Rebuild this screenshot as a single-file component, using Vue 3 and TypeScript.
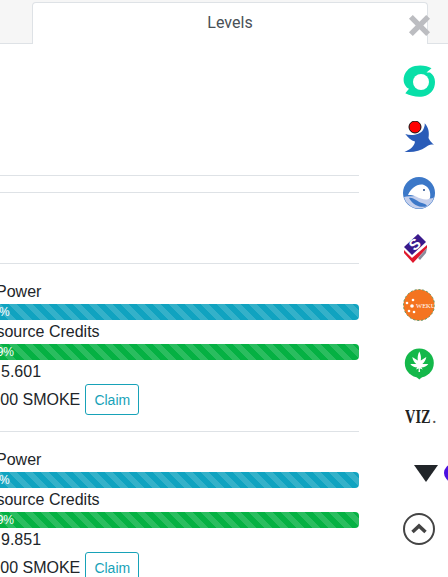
<script setup lang="ts">
interface Account {
  vp: string;
  rc: string;
  value: string;
}

const accounts: Account[] = [
  { vp: '100%', rc: '99%', value: '5.601' },
  { vp: '100%', rc: '99%', value: '9.851' },
];
</script>

<template>
  <div class="page">
    <header class="tabs">
      <div class="tab">Levels</div>
      <svg class="close" viewBox="0 0 24 24" aria-label="close">
        <path d="M5 1 L12 8 L19 1 L23 5 L16 12 L23 19 L19 23 L12 16 L5 23 L1 19 L8 12 L1 5 Z" fill="#bcbdc1" />
      </svg>
    </header>

    <div class="body">
      <main class="main">
        <div class="block block--first"></div>
        <div class="block block--second"></div>
        <div class="block block--third"></div>

        <section v-for="item in accounts" :key="item.value" class="account">
          <div class="label label--power">Power</div>
          <div class="progress">
            <div class="bar bar--info">{{ item.vp }}</div>
          </div>
          <div class="label">Resource Credits</div>
          <div class="progress">
            <div class="bar bar--success">{{ item.rc }}</div>
          </div>
          <div class="label label--value">{{ item.value }}</div>
          <div class="reward">
            <span>0.000 SMOKE</span>
            <button class="claim" type="button">Claim</button>
          </div>
        </section>
      </main>

      <aside class="side">
        <svg class="icon" viewBox="0 0 32 32">
          <path d="M28.500 3.300C24 .5 14-1 7 3 1 7-1 15 2 20c1 2 2.500 3.300 4 3.800L2.300 28.300C8 31 14 32.500 20 31.500 28 30 32 24 32 17c0-4.500-2-7.500-5-9.500h-3.500z" fill="#08dfa8" />
          <circle cx="18" cy="17" r="8" fill="#fff" />
        </svg>

        <svg class="icon" viewBox="0 0 32 32">
          <path d="M21.700 2.300C25.500 6 26.500 12 25.500 17 27 20 28 21 31 24 28 23 25.500 24 23 26 17 30 9 32 1.500 30.700 7 29 11.500 25 12 20.500 8 19.500 5 16.500 2.300 13 8 15 17 14 20 9 21 7 22 5 21.700 2.300Z" fill="#2a5cb8" />
          <circle cx="12" cy="6" r="6" fill="#f00" stroke="#111" stroke-width="1" />
        </svg>

        <svg class="icon" viewBox="0 0 32 32">
          <circle cx="16" cy="16" r="16" fill="#3c78c8" />
          <path d="M1 20A15.500 15.500 0 0 0 31 20C28 24 20 18 13 19 8 19.500 4 19 1 20Z" fill="#c4cfec" />
          <path d="M5 18C8 11 15 6 21 8 26 10 28 15 27 21 24 24 18 22 13 19.500 10 18 8 18 5 18Z" fill="#fff" />
          <path d="M6 21C11 20 14 25 19 26 21 26.500 23 27 24 29 20 31 11 30 6 21Z" fill="#3c78c8" />
          <circle cx="21" cy="13" r="1" fill="#234d8a" />
        </svg>

        <svg class="icon" viewBox="0 0 32 32">
          <path d="M1 17 L9 25 L24 12 L24 15 L10 30 L1 20 Z" fill="#e0182d" />
          <path d="M15 25 L24 15 L23 20 L17 27 Z" fill="#8a8a9a" />
          <path d="M1 14 L15 1 L23 9 L9 22 Z" fill="#3a1a8c" />
          <text class="icon-letter" x="12" y="16.500" text-anchor="middle" transform="rotate(-42 12 11.500)">S</text>
        </svg>

        <svg class="icon" viewBox="0 0 32 32">
          <circle cx="16" cy="16" r="15.500" fill="#f47420" stroke="#5a9a6a" stroke-width="1" stroke-dasharray="2 2" />
          <circle cx="4" cy="14" r="1.300" fill="#fff" />
          <circle cx="9" cy="17" r="1.800" fill="#fff" />
          <circle cx="6" cy="22" r="1.300" fill="#fff" />
          <circle cx="10" cy="11" r="1.300" fill="#fff" />
          <circle cx="11" cy="23" r="1.300" fill="#fff" />
          <text class="icon-weku" x="13" y="18.500">WEKU</text>
        </svg>

        <svg class="icon icon--pin" viewBox="0 0 32 32">
          <g transform="translate(0.300 3.500)">
            <circle cx="16" cy="14.500" r="14.500" fill="#14b84a" />
            <path d="M12 27.500 L20 27.500 L16 31 Z" fill="#14b84a" />
            <path d="M16 3C17.500 6 18 9 17.500 12L23 8.500C22.500 11.500 21 14 19 15.500L25 15.500C23.500 17.500 21 19 18 19L19.500 21 16.500 20 16.800 23.500H15.200L15.500 20 12.500 21 14 19C11 19 8.500 17.500 7 15.500L13 15.500C11 14 9.500 11.500 9 8.500L14.500 12C14 9 14.500 6 16 3Z" fill="#fff" />
          </g>
        </svg>

        <div class="viz"><span class="viz-name">VIZ</span><span class="viz-dot">.</span></div>

        <div class="dropdown">
          <svg class="caret" viewBox="0 0 24 17">
            <path d="M0 0H24L12 17Z" fill="#212529" />
          </svg>
          <span class="dot"></span>
        </div>

        <svg class="icon" viewBox="0 0 32 32">
          <circle cx="16" cy="16" r="15" fill="none" stroke="#444" stroke-width="2" />
          <path d="M9.500 19L16 13L22.500 19" fill="none" stroke="#444" stroke-width="3.500" />
        </svg>
      </aside>
    </div>
  </div>
</template>

<style scoped>
.page {
  width: 448px;
  height: 577px;
  overflow: hidden;
  background: #fff;
  color: #212529;
  font-family: "Liberation Sans", Arial, sans-serif;
  font-size: 16px;
  line-height: 24px;
}

.tabs {
  position: relative;
  display: flex;
  height: 44px;
  box-sizing: border-box;
  padding: 2px 20px 0 32px;
  background: #f6f6f6;
  border-bottom: 1px solid #dee2e6;
}

.tab {
  width: 396px;
  height: 42px;
  box-sizing: border-box;
  background: #fff;
  border: 1px solid #dee2e6;
  border-bottom: 0;
  border-radius: 4px 4px 0 0;
  text-align: center;
  color: #495057;
  font-family: Roboto, sans-serif;
  line-height: 39px;
}

.close {
  position: absolute;
  left: 408px;
  top: 14px;
  width: 23px;
  height: 23px;
}

.body {
  display: flex;
}

.main {
  flex: none;
  width: 383px;
  margin-left: -24px;
}

.block {
  border-bottom: 1px solid #dee2e6;
}

.block--first {
  height: 131px;
}

.block--second {
  height: 16px;
}

.block--third {
  height: 70px;
}

.account {
  padding: 16px 0;
  border-bottom: 1px solid #dee2e6;
}

.label--power {
  padding-left: 20px;
}

.label--value {
  padding-left: 25px;
}

.progress {
  height: 16px;
  overflow: hidden;
  border-radius: 4px;
  background: #e9ecef;
}

.bar {
  height: 100%;
  color: #fff;
  font-size: 12px;
  line-height: 16px;
  background-image: linear-gradient(45deg, rgba(255, 255, 255, 0.15) 25%, transparent 25%, transparent 50%, rgba(255, 255, 255, 0.15) 50%, rgba(255, 255, 255, 0.15) 75%, transparent 75%, transparent);
  background-size: 16px 16px;
}

.bar--info {
  padding-left: 3px;
  background-color: #10a3c0;
}

.bar--success {
  padding-left: 14px;
  background-color: #05b143;
}

.reward {
  display: flex;
  align-items: center;
  gap: 5px;
  margin-left: 2px;
  height: 31px;
}

.claim {
  flex: none;
  width: 54px;
  height: 31px;
  padding: 0;
  background: transparent;
  border: 1px solid #17a2b8;
  border-radius: 3px;
  color: #17a2b8;
  font-family: inherit;
  font-size: 14px;
}

.side {
  flex: none;
  display: flex;
  flex-direction: column;
  gap: 24px;
  width: 32px;
  margin: 21px 0 0 44px;
}

.icon {
  flex: none;
  display: block;
  width: 32px;
  height: 32px;
}

.icon--pin {
  overflow: visible;
}

.icon-letter {
  font-family: "Liberation Sans", sans-serif;
  font-size: 15px;
  font-weight: 700;
  fill: #fff;
}

.icon-weku {
  font-family: "Liberation Serif", serif;
  font-size: 6.500px;
  fill: #fff;
}

.viz {
  flex: none;
  display: flex;
  align-items: baseline;
  height: 32px;
  font-family: "Liberation Serif", serif;
  font-size: 18px;
  line-height: 32px;
  white-space: nowrap;
  color: #222;
  margin-left: 2px;
}

.viz-name {
  display: inline-block;
  width: 27px;
  font-weight: 700;
  transform: scaleX(0.8);
  transform-origin: left center;
}

.viz-dot {
  color: #555;
}

.dropdown {
  flex: none;
  display: flex;
  align-items: center;
  gap: 6px;
  height: 32px;
  margin-left: 11px;
  width: 50px;
}

.caret {
  flex: none;
  width: 24px;
  height: 17px;
}

.dot {
  flex: none;
  width: 18px;
  height: 18px;
  border-radius: 50%;
  background: #4a0fe0;
}
</style>
